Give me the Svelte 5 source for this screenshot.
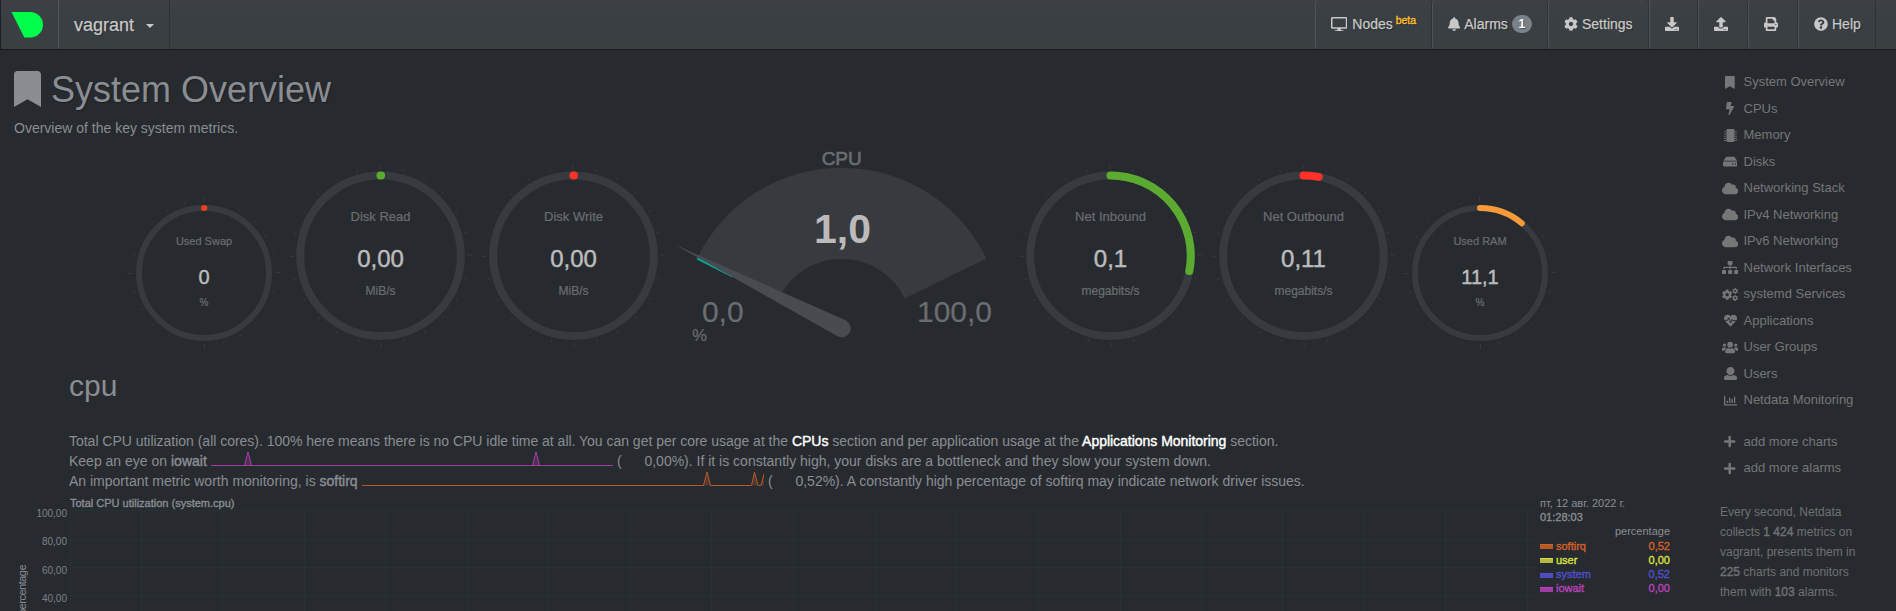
<script>
  const bookmark = 'M0 512V48C0 21.49 21.49 0 48 0h288c26.51 0 48 21.49 48 48v464L192 400 0 512z';
  const cog = 'M487.4 315.7l-42.6-24.6c4.3-23.2 4.3-47 0-70.2l42.6-24.6c4.9-2.8 7.1-8.6 5.5-14-11.1-35.6-30-67.8-54.7-94.6-3.8-4.1-10-5.1-14.8-2.3L380.8 110c-17.9-15.4-38.5-27.3-60.8-35.1V25.8c0-5.6-3.9-10.5-9.4-11.7-36.7-8.2-74.3-7.8-109.2 0-5.5 1.2-9.4 6.1-9.4 11.7V75c-22.2 7.9-42.8 19.8-60.8 35.1L88.7 85.5c-4.9-2.8-11-1.9-14.8 2.3-24.7 26.7-43.6 58.9-54.7 94.6-1.7 5.4.6 11.2 5.5 14L67.3 221c-4.3 23.2-4.3 47 0 70.2l-42.6 24.6c-4.9 2.8-7.1 8.6-5.5 14 11.1 35.6 30 67.8 54.7 94.6 3.8 4.1 10 5.1 14.8 2.3l42.6-24.6c17.9 15.4 38.5 27.3 60.8 35.1v49.2c0 5.6 3.9 10.5 9.4 11.7 36.7 8.2 74.3 7.8 109.2 0 5.5-1.2 9.4-6.1 9.4-11.7v-49.2c22.2-7.9 42.8-19.8 60.8-35.1l42.6 24.6c4.9 2.8 11 1.9 14.8-2.3 24.7-26.7 43.6-58.9 54.7-94.6 1.5-5.5-.7-11.3-5.6-14.1zM256 336c-44.1 0-80-35.9-80-80s35.9-80 80-80 80 35.9 80 80-35.9 80-80 80z';
  const cloud = 'M537.6 226.6c4.1-10.7 6.4-22.4 6.4-34.6 0-53-43-96-96-96-19.7 0-38.1 6-53.3 16.2C367 64.2 315.3 32 256 32c-88.4 0-160 71.6-160 160 0 2.7.1 5.4.2 8.1C40.2 219.8 0 273.2 0 336c0 79.5 64.5 144 144 144h368c70.7 0 128-57.3 128-128 0-61.9-44-113.6-102.4-125.4z';
  const plus = 'M416 208H272V64c0-17.67-14.33-32-32-32h-32c-17.67 0-32 14.33-32 32v144H32c-17.67 0-32 14.33-32 32v32c0 17.67 14.33 32 32 32h144v144c0 17.67 14.33 32 32 32h32c17.67 0 32-14.33 32-32V304h144c17.67 0 32-14.33 32-32v-32c0-17.67-14.33-32-32-32z';
  const icons = {
    bookmark: { w: 384, d: bookmark },
    cog: { w: 512, d: cog },
    cloud: { w: 640, d: cloud },
    plus: { w: 448, d: plus },
    bolt: { w: 320, d: 'M296 160H180.6l42.6-129.8C227.2 15 215.7 0 200 0H56C44 0 33.8 8.9 32.2 20.8l-32 240C-1.7 275.2 9.5 288 24 288h118.7L96.6 482.5c-3.6 15.2 8 29.5 23.3 29.5 8.4 0 16.4-4.4 20.8-12l176-304c9.3-15.9-2.2-36-20.7-36z' },
    chip: { w: 512, d: 'M144 0h224a48 48 0 0 1 48 48v416a48 48 0 0 1-48 48H144a48 48 0 0 1-48-48V48a48 48 0 0 1 48-48zM24 88h48v40H0v-24h24zM24 176h48v40H0v-24h24zM24 264h48v40H0v-24h24zM24 352h48v40H0v-24h24zM24 430h48v40H0v-24h24zM440 88h48v16h24v24h-72zM440 176h48v16h24v24h-72zM440 264h48v16h24v24h-72zM440 352h48v16h24v24h-72zM440 430h48v16h24v24h-72z' },
    hdd: { w: 576, d: 'M576 304v96c0 26.51-21.49 48-48 48H48c-26.51 0-48-21.49-48-48v-96c0-26.51 21.49-48 48-48h480c26.51 0 48 21.49 48 48zm-48-80a79.557 79.557 0 0 1 30.777 6.165L462.25 85.374A48.003 48.003 0 0 0 422.311 64H153.689a48 48 0 0 0-39.938 21.374L17.223 230.165A79.557 79.557 0 0 1 48 224h480zm-48 96c-17.673 0-32 14.327-32 32s14.327 32 32 32 32-14.327 32-32-14.327-32-32-32zm-96 0c-17.673 0-32 14.327-32 32s14.327 32 32 32 32-14.327 32-32-14.327-32-32-32z' },
    sitemap: { w: 640, d: 'M128 352H32c-17.67 0-32 14.33-32 32v96c0 17.67 14.33 32 32 32h96c17.67 0 32-14.33 32-32v-96c0-17.67-14.33-32-32-32zm-24-80h192v48h48v-48h192v48h48v-57.59c0-21.17-17.23-38.41-38.41-38.41H344v-64h40c17.67 0 32-14.33 32-32V32c0-17.67-14.33-32-32-32H256c-17.67 0-32 14.33-32 32v96c0 17.67 14.33 32 32 32h40v64H94.41C73.23 224 56 241.23 56 262.41V320h48v-48zm264 80h-96c-17.67 0-32 14.33-32 32v96c0 17.67 14.33 32 32 32h96c17.67 0 32-14.33 32-32v-96c0-17.67-14.33-32-32-32zm240 0h-96c-17.67 0-32 14.33-32 32v96c0 17.67 14.33 32 32 32h96c17.67 0 32-14.33 32-32v-96c0-17.67-14.33-32-32-32z' },
    group: { w: 640, d: 'M96 224a64 64 0 1 0 0-128 64 64 0 0 0 0 128zM544 224a64 64 0 1 0 0-128 64 64 0 0 0 0 128zM320 256a112 112 0 1 0 0-224 112 112 0 0 0 0 224zM64 256h64c17 0 33 7 45 18-40 22-69 62-75 110H32c-18 0-32-14-32-32v-32c0-35 29-64 64-64zM512 256h64c35 0 64 29 64 64v32c0 18-14 32-32 32h-66c-6-48-35-88-75-110 12-11 28-18 45-18zM243 288h8c42 20 96 20 138 0h8c64 0 115 51 115 115v29c0 26-22 48-48 48H176c-26 0-48-22-48-48v-29c0-64 51-115 115-115z' },
    user: { w: 512, d: 'M256 0c88.366 0 160 71.634 160 160s-71.634 160-160 160S96 248.366 96 160 167.634 0 256 0zm183.283 333.821l-71.313-17.828c-74.923 53.89-165.738 41.864-223.94 0l-71.313 17.828C29.981 344.505 0 382.903 0 426.955V464c0 26.51 21.49 48 48 48h416c26.51 0 48-21.49 48-48v-37.045c0-44.052-29.981-82.45-72.717-93.134z' },
    bars: { w: 512, d: 'M0 76a12 12 0 0 1 12-12h24a12 12 0 0 1 12 12v324h452a12 12 0 0 1 12 12v24a12 12 0 0 1-12 12H24a24 24 0 0 1-24-24zM116 264h28a12 12 0 0 1 12 12v80h-52v-80a12 12 0 0 1 12-12zM212 136h28a12 12 0 0 1 12 12v208h-52V148a12 12 0 0 1 12-12zM308 200h28a12 12 0 0 1 12 12v144h-52V212a12 12 0 0 1 12-12zM404 104h28a12 12 0 0 1 12 12v240h-52V116a12 12 0 0 1 12-12z' },
    bell: { w: 448, d: 'M224 512c35.32 0 63.97-28.65 63.97-64H160.03c0 35.35 28.65 64 63.97 64zm215.39-149.71c-19.32-20.76-55.47-51.99-55.47-154.29 0-77.7-54.48-139.9-127.94-155.16V32c0-17.67-14.32-32-31.98-32s-31.98 14.33-31.98 32v20.84C118.56 68.1 64.08 130.3 64.08 208c0 102.3-36.15 133.53-55.47 154.29-6 6.45-8.66 14.16-8.61 21.71.11 16.4 12.98 32 32.1 32h383.8c19.12 0 32-15.6 32.1-32 .05-7.55-2.61-15.27-8.61-21.71z' },
    download: { w: 512, d: 'M216 0h80c13.3 0 24 10.7 24 24v168h87.7c17.8 0 26.7 21.5 14.1 34.1L269.7 378.3c-7.5 7.5-19.8 7.5-27.3 0L90.1 226.1c-12.6-12.6-3.7-34.1 14.1-34.1H192V24c0-13.3 10.7-24 24-24zm296 376v112c0 13.3-10.7 24-24 24H24c-13.3 0-24-10.7-24-24V376c0-13.3 10.7-24 24-24h146.7l49 49c20.1 20.1 52.5 20.1 72.6 0l49-49H488c13.3 0 24 10.7 24 24zm-124 88c0-11-9-20-20-20s-20 9-20 20 9 20 20 20 20-9 20-20zm64 0c0-11-9-20-20-20s-20 9-20 20 9 20 20 20 20-9 20-20z' },
    upload: { w: 512, d: 'M296 384h-80c-13.3 0-24-10.7-24-24V192h-87.7c-17.8 0-26.7-21.5-14.1-34.1L242.3 5.7c7.5-7.5 19.8-7.5 27.3 0l152.2 152.2c12.6 12.6 3.7 34.1-14.1 34.1H320v168c0 13.3-10.7 24-24 24zm216-8v112c0 13.3-10.7 24-24 24H24c-13.3 0-24-10.7-24-24V376c0-13.3 10.7-24 24-24h136v8c0 30.9 25.1 56 56 56h80c30.9 0 56-25.1 56-56v-8h136c13.3 0 24 10.7 24 24zm-124 88c0-11-9-20-20-20s-20 9-20 20 9 20 20 20 20-9 20-20zm64 0c0-11-9-20-20-20s-20 9-20 20 9 20 20 20 20-9 20-20z' },
    print: { w: 512, d: 'M448 192V77.25c0-8.49-3.37-16.62-9.37-22.63L393.37 9.37c-6-6-14.14-9.37-22.63-9.37H96C78.33 0 64 14.33 64 32v160c-35.35 0-64 28.65-64 64v112c0 8.84 7.16 16 16 16h48v96c0 17.67 14.33 32 32 32h320c17.67 0 32-14.33 32-32v-96h48c8.84 0 16-7.16 16-16V256c0-35.35-28.65-64-64-64zm-64 256H128v-96h256v96zm0-224H128V64h192v48c0 8.84 7.16 16 16 16h48v96zm48 72c-13.25 0-24-10.75-24-24 0-13.26 10.75-24 24-24s24 10.74 24 24c0 13.25-10.75 24-24 24z' },
    help: { w: 512, d: 'M504 256c0 136.997-111.043 248-248 248S8 392.997 8 256C8 119.083 119.043 8 256 8s248 111.083 248 248zM262.655 90c-54.497 0-89.255 22.957-116.549 63.758-3.536 5.286-2.353 12.415 2.715 16.258l34.699 26.31c5.205 3.947 12.621 3.008 16.665-2.122 17.864-22.658 30.113-35.797 57.303-35.797 20.429 0 45.698 13.148 45.698 32.958 0 14.976-12.363 22.667-32.534 33.976C247.128 238.528 216 254.941 216 296v4c0 6.627 5.373 12 12 12h56c6.627 0 12-5.373 12-12v-1.333c0-28.462 83.186-29.647 83.186-106.667 0-58.002-60.165-102-116.531-102zM256 338c-25.365 0-46 20.635-46 46 0 25.364 20.635 46 46 46s46-20.636 46-46c0-25.365-20.635-46-46-46z' },
    desktop: { w: 576, d: 'M48 0h480a48 48 0 0 1 48 48v320a48 48 0 0 1-48 48H48a48 48 0 0 1-48-48V48A48 48 0 0 1 48 0zM54 54v308h468V54zM230 416h116l14 48h60a24 24 0 0 1 0 48H156a24 24 0 0 1 0-48h60z' }
  };

  const menu = [
    ['bookmark', 'System Overview'], ['bolt', 'CPUs'], ['chip', 'Memory'], ['hdd', 'Disks'],
    ['cloud', 'Networking Stack'], ['cloud', 'IPv4 Networking'], ['cloud', 'IPv6 Networking'],
    ['sitemap', 'Network Interfaces'], ['cogs', 'systemd Services'], ['heart', 'Applications'],
    ['group', 'User Groups'], ['user', 'Users'], ['bars', 'Netdata Monitoring']
  ];
  const extra = [['plus', 'add more charts'], ['plus', 'add more alarms']];

  const leftPies = [
    { small: true, title: 'Used Swap', value: '0', unit: '%', color: '#e8411f', sweep: 0 },
    { title: 'Disk Read', value: '0,00', unit: 'MiB/s', color: '#5cab31', sweep: 0 },
    { title: 'Disk Write', value: '0,00', unit: 'MiB/s', color: '#ff3227', sweep: 0 }
  ];
  const rightPies = [
    { title: 'Net Inbound', value: '0,1', unit: 'megabits/s', color: '#5cab31', sweep: 101 },
    { title: 'Net Outbound', value: '0,11', unit: 'megabits/s', color: '#ff3227', sweep: 10.9 },
    { small: true, title: 'Used RAM', value: '11,1', unit: '%', color: '#f79a37', sweep: 40 }
  ];

  function arc(r, deg) {
    const a = (Math.max(deg, 0.4) * Math.PI) / 180;
    return `M0 ${-r}A${r} ${r} 0 ${deg > 180 ? 1 : 0} 1 ${r * Math.sin(a)} ${-r * Math.cos(a)}`;
  }

  const ticks = Array.from({ length: 24 }, (_, i) => i);
  const gridX = [0.5, 71.5, 152.5, 234.5, 315.5, 397.5, 478.5, 560.5, 641.5, 723.5, 805.5, 886.5, 968.5, 1050.5, 1131.5, 1212.5, 1294.5, 1375.5, 1457.5];
  const gridY = [0.5, 29.5, 57.5, 86.5];
  const legend = [
    ['softirq', '0,52', '#d66027', '#b85827'],
    ['user', '0,00', '#dbe043', '#b6b93b'],
    ['system', '0,52', '#5250cf', '#4e4dc0'],
    ['iowait', '0,00', '#bb41bd', '#a23ba6']
  ];
</script>

{#snippet icon(name, size)}
  {#if name === 'cogs'}
    <svg width={size * 1.25} height={size} viewBox="0 0 640 512">
      <g transform="translate(-8 52) scale(.82)"><path d={cog} /></g>
      <g transform="translate(400 0) scale(.46)"><path d={cog} /></g>
      <g transform="translate(400 278) scale(.46)"><path d={cog} /></g>
    </svg>
  {:else if name === 'heart'}
    <svg width={size} height={size} viewBox="0 0 512 512">
      <path d="M256 500L40 278C-20 214-14 110 50 60c62-50 150-38 206 24 56-62 144-74 206-24 64 50 70 154 10 218z" />
      <path d="M0 250H140L190 150L262 350L320 215L345 262H512" fill="none" stroke="#272b30" stroke-width="38" />
    </svg>
  {:else}
    <svg width={(size * icons[name].w) / 512} height={size} viewBox="0 0 {icons[name].w} 512"><path fill-rule="evenodd" d={icons[name].d} /></svg>
  {/if}
{/snippet}

{#snippet pie(p)}
  {@const s = p.small}
  {@const r = s ? 65 : 80.3}
  {@const half = s ? 80 : 96.5}
  <svg class="pie" width={half * 2} height={s ? 155 : 189} viewBox="{-half} {s ? -80 : -96.7} {half * 2} {s ? 155 : 189}">
    {#each ticks as t}
      {@const major = t % 6 === 0}
      <path
        class="tick"
        d="M0 {-(r + 6.2)}V{-(r + (major ? 11 : s ? 8.6 : 9))}"
        transform="rotate({t * 15 - 0.4})"
      />
    {/each}
    <circle class="track" {r} stroke-width={s ? 6 : 8} />
    <path d={arc(r, p.sweep)} fill="none" stroke={p.color} stroke-width={s ? 6 : 8} stroke-linecap="round" />
    <text class="label" y={s ? -27.7 : -34.7} font-size={s ? 11 : 13}>{p.title}</text>
    <text class="value" y={s ? 10.7 : 11} font-size={s ? 20 : 24}>{p.value}</text>
    <text class="label" y={s ? 33 : 39.3} font-size={s ? 10 : 12}>{p.unit}</text>
  </svg>
{/snippet}

<div class="page">
  <header>
    <div class="logo">
      <svg width="34" height="28" viewBox="0 0 34 28"><path d="M.5 1H19.2A12.8 12.8 0 0 1 19.2 26.6H13.3Z" fill="#00ff4a" /></svg>
    </div>
    <div class="host">vagrant<span class="caret"></span></div>
    <nav>
      <div class="item nodes" style="width:117px">{@render icon('desktop', 14.5)}<span>Nodes <sup>beta</sup></span></div>
      <div class="item" style="width:116px">{@render icon('bell', 14)}<span>Alarms</span><b class="badge">1</b></div>
      <div class="item" style="width:101px">{@render icon('cog', 14)}<span>Settings</span></div>
      <div class="item" style="width:49px">{@render icon('download', 14)}</div>
      <div class="item" style="width:50px">{@render icon('upload', 14)}</div>
      <div class="item" style="width:50px">{@render icon('print', 14)}</div>
      <div class="item" style="width:78px">{@render icon('help', 14)}<span>Help</span></div>
    </nav>
  </header>

  <div class="body">
    <main>
      <h1>{@render icon('bookmark', 36)}<span>System Overview</span></h1>
      <p class="sub">Overview of the key system metrics.</p>

      <section class="gauges">
        {#each leftPies as p}{@render pie(p)}{/each}
        <svg class="dial" width="344" height="218" viewBox="10 0 344 218">
          <path class="face" d="M37 128.6A160.6 160.6 0 0 1 326.4 128.6L244.6 168.4A69.7 69.7 0 0 0 118.8 168.4Z" />
          <path d="M36.6 127.4L37.4 129.8L72 147.2L72 142Z" fill="#00ab9b" />
          <path class="needle" d="M15 114.7L185.6 190.2A9 9 0 1 1 177.2 206.1Z" />
          <text class="label heavy" x="181.7" y="35" font-size="19">CPU</text>
          <text class="main" x="182.5" y="112.7" font-size="41">1,0</text>
          <text class="label" x="62.8" y="191.7" font-size="30">0,0</text>
          <text class="label" x="294.5" y="191.7" font-size="30">100,0</text>
          <text class="label" x="39.7" y="210.7" font-size="16.5">%</text>
        </svg>
        {#each rightPies as p}{@render pie(p)}{/each}
      </section>

      <section class="cpu">
        <h2>cpu</h2>
        <div class="line intro">Total CPU utilization (all cores). 100% here means there is no CPU idle time at all. You can get per core usage at the <a href="#cpus">CPUs</a> section and per application usage at the <a href="#apps">Applications Monitoring</a> section.</div>
        <div class="line">
          <span class="lead1">Keep an eye on <b>iowait</b></span>
          <svg class="spark" width="402" height="20" viewBox="0 1 402 20" stroke="#a43ca8">
            <path fill="#a43ca8" fill-opacity=".3" d="M0 15.5H33.5L37 2L40.5 15.5H321.5L325 2L328.5 15.5H402" />
            <path fill="none" d="M0 15.5H402" />
          </svg>
          <span>(</span><span class="num">0,00</span><span>%). If it is constantly high, your disks are a bottleneck and they slow your system down.</span>
        </div>
        <div class="line">
          <span class="lead2">An important metric worth monitoring, is <b>softirq</b></span>
          <svg class="spark" width="402" height="20" viewBox="0 1 402 20" stroke="#b85827">
            <path fill="#b85827" fill-opacity=".3" stroke="none" d="M341.5 15.5L345 2L348.5 15.5ZM389.5 15.5L392.5 2L396 15.5ZM399 15.5L402 4V15.5Z" />
            <path fill="none" d="M0 15.5H341.5L345 2L348.5 15.5H389.5L392.5 2L396 15.5H399L402 4" />
          </svg>
          <span>(</span><span class="num">0,52</span><span class="tail">%). A constantly high percentage of softirq may indicate network driver issues.</span>
        </div>
      </section>

      <section class="chart">
        <div class="axis">
          <span class="unit">percentage</span>
          <div class="ylabels"><span>100,00</span><span>80,00</span><span>60,00</span><span>40,00</span></div>
        </div>
        <div class="plot">
          <div class="title">Total CPU utilization (system.cpu)</div>
          <svg width="1466" height="101" viewBox="0 0 1466 101">
            {#each gridY as y}<path class="grid" d="M0 {y}H1465" />{/each}
            {#each gridX as x}<path class="grid" d="M{x} 0V101" />{/each}
          </svg>
        </div>
        <div class="legend">
          <div>пт, 12 авг. 2022 г.</div>
          <div class="time">01:28:03</div>
          <div class="units">percentage</div>
          {#each legend as [name, value, color, fill]}
            <div class="entry" style="color:{color}">
              <i style="background:{fill};border-top-color:{color}"></i><span>{name}</span><span class="v">{value}</span>
            </div>
          {/each}
        </div>
      </section>
    </main>

    <aside>
      <ul>
        {#each menu as [ic, text]}<li><span class="ic">{@render icon(ic, 13)}</span>{text}</li>{/each}
      </ul>
      <ul class="more">
        {#each extra as [ic, text]}<li><span class="ic">{@render icon(ic, 13)}</span>{text}</li>{/each}
      </ul>
      <div class="info">
        Every second, Netdata<br />collects <b>1 424</b> metrics on<br />vagrant, presents them in<br /><b>225</b> charts and monitors<br />them with <b>103</b> alarms.
      </div>
    </aside>
  </div>
</div>

<style>
  :global(body) { margin: 0; background: #272b30; overflow: hidden; }
  .page {
    width: 1896px; height: 611px; overflow: hidden; background: #272b30; color: #8a8d92;
    font: 14px/20px "Liberation Sans", Arial, sans-serif; display: flex; flex-direction: column;
  }
  svg { display: block; flex: none; fill: currentColor; }
  header {
    height: 49px; flex: none; display: flex; background: linear-gradient(#3d4145, #3a3f43 40%, #3a3f42);
    border-bottom: 1px solid #17191c; border-left: 1px solid #1d2023; color: #c8c8c8; text-shadow: 1px 1px 1px rgba(0, 0, 0, .4);
    -webkit-text-stroke: .25px currentColor;
  }
  .logo { width: 58px; padding: 11px 0 0 10px; box-sizing: border-box; border-right: 1px solid #505458; }
  .host {
    width: 111px; box-sizing: border-box; padding: 0 0 0 15px; border-right: 1px solid #2e3235;
    display: flex; align-items: center; font-size: 18px; line-height: 38px; height: 49px;
  }
  .caret { margin: 3px 0 0 12px; border: 4px solid transparent; border-top-color: currentColor; border-bottom: 0; }
  nav { margin-left: auto; margin-right: 20px; display: flex; }
  .item {
    box-sizing: border-box; display: flex; align-items: center; gap: 4px; padding: 0 0 1px 15px; white-space: nowrap;
    border-left: 1px solid #505458; border-right: 1px solid #2e3235; border-radius: 4px;
  }
  .nodes { gap: 5px; }
  sup { color: #fbbd2d; font-size: 10.5px; line-height: 0; vertical-align: 5px; margin-left: -1px; -webkit-text-stroke: .4px currentColor; }
  .badge {
    width: 20px; height: 18px; border-radius: 10px; background: #7a8288; color: #fff; font-size: 12px; line-height: 19px; text-align: center;
  }
  .body { display: flex; flex: 1; min-height: 0; }
  main { width: 1720px; flex: none; display: flex; flex-direction: column; }
  h1 { margin: 21px 0 0 14px; height: 36px; font-size: 36px; font-weight: 400; line-height: 38px; display: flex; gap: 10px; text-shadow: 1px 1px 1px rgba(0, 0, 0, .3); }
  .sub { margin: 11px 0 0 14px; }
  .gauges { display: flex; align-items: flex-end; padding-left: 124px; height: 210px; }
  .gauges svg { font-family: inherit; text-anchor: middle; overflow: visible; }
  .track { fill: none; stroke: #373a3f; }
  .tick { stroke: #373a3f; stroke-width: 1; fill: none; }
  .label { fill: #6b6d71; text-anchor: middle; stroke: #6b6d71; stroke-width: .2; }
  .heavy { stroke-width: .6; }
  .value { fill: #bcbcbc; stroke: #bcbcbc; stroke-width: .45; }
  .face { fill: #373a3f; }
  .needle { fill: #484b50; }
  .main { fill: #bcbaba; font-weight: 700; }
  .cpu { padding-left: 69px; }
  h2 { margin: 21px 0 29px; font-size: 30px; line-height: 33px; font-weight: 400; }
  .line { display: flex; white-space: pre; height: 20px; }
  .intro { display: block; letter-spacing: -.02px; }
  .tail { letter-spacing: -.015px; }
  a { color: #fff; text-decoration: none; -webkit-text-stroke: .4px #fff; }
  b { font-weight: 400; -webkit-text-stroke: .4px currentColor; }
  .badge { font-weight: 700; -webkit-text-stroke: 0; }
  .lead1 { width: 142px; }
  .lead2 { width: 293px; }
  .spark { margin-right: 4px; }
  .num { width: 50px; text-align: right; }
  .chart { display: flex; flex: 1; min-height: 0; margin-top: 5px; font-size: 11px; line-height: 14px; }
  .axis { width: 70px; display: flex; justify-content: space-between; }
  .unit { writing-mode: vertical-rl; transform: rotate(180deg); margin: 69px 0 0 15px; height: 50px; letter-spacing: -.5px; }
  .ylabels { padding: 12px 3px 0 0; font-size: 10px; text-align: right; display: flex; flex-direction: column; line-height: 12px; gap: 16.4px; color: #7e8185; }
  .plot { width: 1470px; }
  .title { -webkit-text-stroke: .35px currentColor; height: 14px; }
  .grid { stroke: #273235; fill: none; }
  .legend { width: 130px; line-height: 14.2px; }
  .time { -webkit-text-stroke: .35px currentColor; }
  .units { text-align: right; }
  .entry { display: flex; align-items: center; -webkit-text-stroke: .35px currentColor; }
  .entry i { width: 13px; height: 4px; border-top: 1px solid; margin: 2px 3px 0 0; }
  .v { margin-left: auto; }
  aside { color: #767676; font-size: 13px; padding-top: 19px; }
  ul { list-style: none; margin: 0; padding: 0; }
  li { height: 26.53px; line-height: 26.53px; display: flex; align-items: center; white-space: nowrap; }
  .ic { width: 20px; margin-right: 3.5px; display: flex; justify-content: center; }
  .more { margin-top: 15px; }
  .info { margin-top: 20px; font-size: 12px; line-height: 20px; white-space: nowrap; color: #707173; }
</style>
